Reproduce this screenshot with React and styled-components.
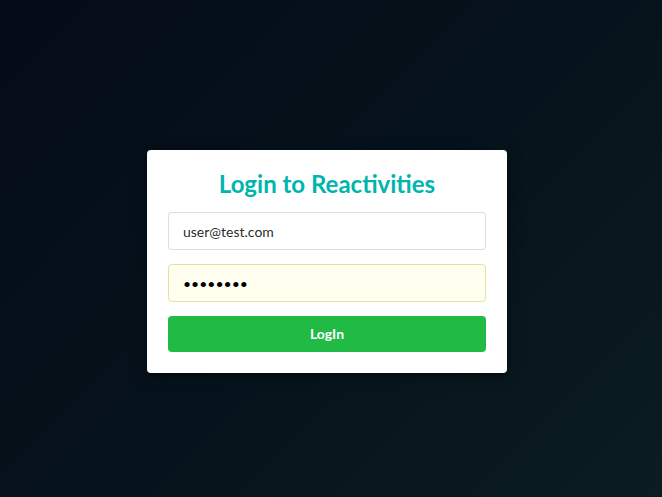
import styled, {createGlobalStyle} from 'styled-components';

const GlobalStyle = createGlobalStyle`
  html, body {
    margin: 0;
    padding: 0;
  }

  body {
    font-family: Lato, 'Helvetica Neue', Arial, sans-serif;
    font-size: 14px;
  }

  * {
    box-sizing: border-box;
  }
`;

const App = () => {
  return (
    <>
      <GlobalStyle />
      <Page>
        <Card>
          <Title>Login to Reactivities</Title>
          <Form onSubmit={(e) => e.preventDefault()}>
            <Input type="email" defaultValue="user@test.com" />
            <Input type="password" defaultValue="Pa$$w0rd" filled />
            <SubmitButton type="submit">LogIn</SubmitButton>
          </Form>
        </Card>
      </Page>
    </>
  );
};

const Page = styled.div`
  width: 100vw;
  height: 100vh;
  display: flex;
  align-items: center;
  justify-content: center;
  padding: 26px 8px 0 0;
  background: linear-gradient(135deg, #040c17 0%, #06121b 50%, #0b1c22 100%);
`;

const Card = styled.div`
  width: 360px;
  padding: 21px;
  background-color: #ffffff;
  border-radius: 4px;
  box-shadow: 1px 3px 3px 0 rgba(0, 0, 0, 0.2),
    1px 3px 15px 2px rgba(0, 0, 0, 0.2);
`;

const Title = styled.h2`
  margin: 0 0 16px;
  height: 25px;
  line-height: 25px;
  text-align: center;
  font-size: 24px;
  font-weight: 700;
  color: #00b5ad;
`;

const Form = styled.form`
  display: flex;
  flex-direction: column;
  gap: 14px;
`;

const Input = styled.input`
  width: 100%;
  height: 38px;
  padding: 0 14px;
  font-family: Lato, 'Helvetica Neue', Arial, sans-serif;
  font-size: 14px;
  color: rgba(0, 0, 0, 0.87);
  background-color: #ffffff;
  border: 1px solid rgba(34, 36, 38, 0.15);
  border-radius: 4px;
  outline: none;

  ${(props) =>
    props.filled &&
    'background-color: #fffff0; border-color: #e5dfa1; color: #000;'}
`;

const SubmitButton = styled.button`
  height: 36px;
  padding-bottom: 2px;
  border: none;
  border-radius: 4px;
  background-color: #21ba45;
  color: #ffffff;
  font-family: Lato, 'Helvetica Neue', Arial, sans-serif;
  font-size: 14px;
  font-weight: 700;
  cursor: pointer;
`;

export default App;
